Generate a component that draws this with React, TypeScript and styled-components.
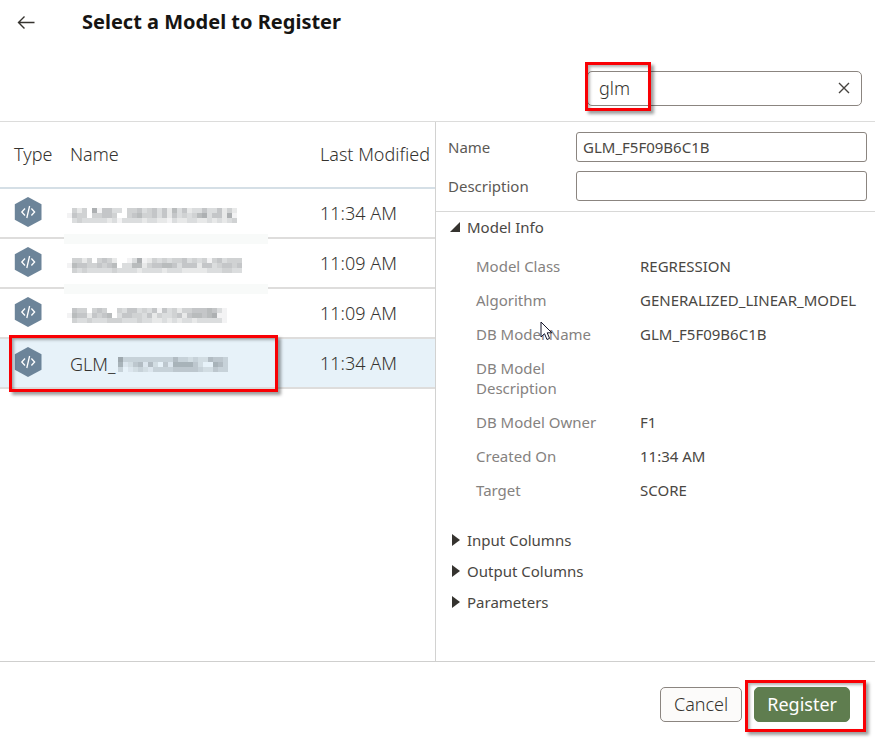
import React, { useState } from "react";
import styled, { createGlobalStyle, css } from "styled-components";

const GlobalStyle = createGlobalStyle`
  * { box-sizing: border-box; }
  body {
    margin: 0;
    background: #fff;
    color: #35332f;
    font-family: "Noto Sans", "Open Sans", sans-serif;
    font-size: 15px;
    font-weight: 300;
  }
  button, input { font: inherit; color: inherit; }
`;

const Page = styled.div`
  display: flex;
  flex-direction: column;
  min-height: 100vh;
`;

const Header = styled.header`
  display: flex;
  flex-direction: column;
  gap: 27px;
  padding-bottom: 15px;
  border-bottom: 1px solid #dcdcdb;
`;

const TitleBar = styled.div`
  display: flex;
  align-items: center;
  gap: 40px;
  height: 44px;
  padding-left: 10px;
`;

const IconButton = styled.button`
  display: grid;
  place-items: center;
  width: 32px;
  height: 32px;
  padding: 0;
  border: 0;
  background: none;
  cursor: pointer;
`;

const Title = styled.h1`
  margin: 0;
  font-size: 20px;
  line-height: 28px;
  font-weight: 700;
  color: #161513;
`;

const SearchRow = styled.div`
  display: flex;
  justify-content: flex-end;
  padding-right: 13px;
`;

const SearchBox = styled.div`
  position: relative;
  display: flex;
  align-items: center;
  width: 275px;
  height: 35px;
  padding: 0 1px 2px 11px;
  border: 1px solid #8b8580;
  border-radius: 5px;
`;

const SearchInput = styled.input`
  flex: 1;
  min-width: 0;
  padding: 0;
  border: 0;
  outline: 0;
  background: none;
  font-size: 18px;
`;

const Highlight = styled.span<{ $area: "search" | "row" | "submit" }>`
  position: absolute;
  z-index: 1;
  pointer-events: none;
  border: 3px solid #f90004;
  box-shadow: 3px 3px 3px rgba(0, 0, 0, 0.38), inset 2px 2px 3px rgba(0, 0, 0, 0.3);
  ${({ $area }) => $area === "search" && css`top: -10px; bottom: -6px; left: -3px; width: 66px;`}
  ${({ $area }) => $area === "row" && css`top: -4px; bottom: -5px; left: -61px; right: 42px;`}
  ${({ $area }) => $area === "submit" && css`top: -7px; bottom: -10px; left: -9px; right: -16px;`}
`;

const Main = styled.main`
  flex: 1;
  display: grid;
  grid-template-columns: minmax(0, 436fr) minmax(0, 439fr);
`;

const ListPane = styled.section`
  border-right: 1px solid #d2d2d1;
`;

const ModelTable = styled.table`
  width: 100%;
  table-layout: fixed;
  border-collapse: separate;
  border-spacing: 0;
  font-size: 18px;
  line-height: 24px;
`;

const HeadCell = styled.th<{ $width?: number }>`
  width: ${({ $width }) => ($width ? `${$width}px` : "auto")};
  height: 67px;
  padding: 0 0 2px;
  border-bottom: 2px solid #d5dfe6;
  text-align: left;
  font-weight: 300;
  white-space: nowrap;

  &:first-child { padding-left: 14px; }
`;

const ModelRow = styled.tr<{ $selected: boolean }>`
  background: ${({ $selected }) => ($selected ? "#e7f2f9" : "#fff")};
`;

const Cell = styled.td`
  position: relative;
  height: 50px;
  padding: 0;
  border-bottom: 2px solid #dedddc;
  white-space: nowrap;
`;

const TypeCell = styled(Cell)`
  padding: 0 0 2px 14px;

  svg { display: block; }
`;

const NameCell = styled(Cell)<{ $masked: boolean }>`
  padding-top: ${({ $masked }) => ($masked ? 5 : 2)}px;
`;

const NameLine = styled.span<{ $masked: boolean }>`
  display: flex;
  align-items: center;
  gap: 2px;
  margin-left: ${({ $masked }) => ($masked ? -3 : 0)}px;
`;

const Mosaic = styled.svg`
  display: block;
  flex: none;
`;

const Smudge = styled.span`
  position: absolute;
  left: -6px;
  right: 52px;
  bottom: -7px;
  height: 10px;
  z-index: 1;
  background: #f8faf9;
`;

const DetailPane = styled.section`
  position: relative;
  font-weight: 400;
`;

const Form = styled.form`
  display: grid;
  gap: 9px;
  padding: 10px 8px 10px 12px;
  border-bottom: 1px solid #d8d8d7;
`;

const Field = styled.div`
  display: grid;
  grid-template-columns: 128px minmax(0, 1fr);
  align-items: center;
`;

const Label = styled.label`
  font-size: 15px;
  line-height: 20px;
  color: #5c5955;
`;

const TextInput = styled.input`
  width: 100%;
  height: 30px;
  padding: 0 6px;
  border: 1px solid #8b8580;
  border-radius: 3px;
  background: #fff;
  font-size: 15px;
  color: #4a4743;
`;

const Sections = styled.div`
  display: grid;
  gap: 1px;
  padding-left: 14px;
`;

const Toggle = styled.button`
  display: flex;
  align-items: center;
  gap: 6px;
  width: 100%;
  height: 30px;
  padding: 0;
  border: 0;
  background: none;
  text-align: left;
  color: #4a4743;
  cursor: pointer;
`;

const InfoList = styled.dl`
  display: grid;
  grid-template-columns: 140px minmax(0, 1fr);
  gap: 14px 24px;
  margin: 0;
  padding: 13px 0 24px 26px;
  line-height: 20px;
`;

const Term = styled.dt`
  color: #85827f;
`;

const Value = styled.dd`
  margin: 0;
  white-space: nowrap;
  color: #4a4743;
`;

const Pointer = styled.svg`
  position: absolute;
  top: 199px;
  left: 104px;
  pointer-events: none;
`;

const Footer = styled.footer`
  display: flex;
  align-items: center;
  justify-content: flex-end;
  gap: 12px;
  height: 82px;
  padding: 3px 25px 0 0;
  border-top: 1px solid #cfcfce;
`;

const SubmitWrap = styled.div`
  position: relative;
`;

const ActionButton = styled.button<{ $primary?: boolean }>`
  display: block;
  height: 35px;
  padding: 0 ${({ $primary }) => ($primary ? 12 : 13)}px;
  border: 1px solid ${({ $primary }) => ($primary ? "#5f7d4f" : "#8b8580")};
  border-radius: 5px;
  background: ${({ $primary }) => ($primary ? "#5f7d4f" : "#fcfbfa")};
  color: ${({ $primary }) => ($primary ? "#fff" : "#35332f")};
  font-size: 18px;
  font-weight: ${({ $primary }) => ($primary ? 400 : 300)};
  cursor: pointer;
`;

const BackIcon = () => (
  <svg width="18" height="14" viewBox="0 0 18 14" fill="none" stroke="#35332f" strokeWidth="1.4">
    <path d="M7.5 1.5 1.5 7.5 7.5 13.5M1.5 7.5H17.5" />
  </svg>
);

const ClearIcon = () => (
  <svg width="12" height="12" viewBox="0 0 12 12" fill="none" stroke="#46433f" strokeWidth="1.4">
    <path d="m1 1 10 10M11 1 1 11" />
  </svg>
);

const ModelIcon = () => (
  <svg width="28" height="30" viewBox="0 0 28 30" role="img" aria-label="Model">
    <path d="M14 0 27.5 7.2v15.6L14 30 .8 22.8V7.2Z" fill="#6c8499" />
    <g fill="none" stroke="#fff" strokeWidth="1.3">
      <path d="M11 11.5 7.8 15l3.2 3.5M17.4 11.5l3.2 3.5-3.2 3.5M15.6 9 12.8 21" />
    </g>
  </svg>
);

const Caret = ({ open }: { open: boolean }) => (
  <svg width="11" height="12" viewBox="0 0 11 12" fill="#35332f">
    <path d={open ? "M10 1v10H0Z" : "M2 0v12l8-6Z"} />
  </svg>
);

const CELL = 5;

/* Each digit is the darkness of one block; 0 leaves the block clear. */
const Redaction = ({ rows }: { rows: string[] }) => (
  <Mosaic width={rows[0].length * CELL} height={rows.length * CELL} shapeRendering="crispEdges" aria-hidden="true">
    {rows.flatMap((row, y) =>
      row.split("").map((level, x) =>
        level === "0" ? null : (
          <rect
            key={`${x}-${y}`}
            x={x * CELL}
            y={y * CELL}
            width={CELL}
            height={CELL}
            fill="#222b30"
            fillOpacity={Number(level) * 0.053}
          />
        )
      )
    )}
  </Mosaic>
);

type Model = { prefix?: string; blocks: string[]; modified: string; smudge?: boolean };

const models: Model[] = [
  {
    blocks: [
      "0424071553304453453526352335335242",
      "1544044554004564453525343467355271",
      "0343333323133332332213223322323234",
    ],
    modified: "11:34 AM",
    smudge: true,
  },
  {
    blocks: [
      "04424045420013712434344534341453444",
      "16554454560336624556653555255345545",
      "04343333343333233332333222223334433",
    ],
    modified: "11:09 AM",
    smudge: true,
  },
  {
    blocks: [
      "05440454004355343515342445556531",
      "16552545603554435243345256656711",
      "04334333444333433223232332333331",
    ],
    modified: "11:09 AM",
  },
  {
    prefix: "GLM_",
    blocks: [
      "7333333333353323225443",
      "6124515204166664200653",
      "3012321333344444322433",
    ],
    modified: "11:34 AM",
  },
];

const modelInfo: [string, string][] = [
  ["Model Class", "REGRESSION"],
  ["Algorithm", "GENERALIZED_LINEAR_MODEL"],
  ["DB Model Name", "GLM_F5F09B6C1B"],
  ["DB Model Description", ""],
  ["DB Model Owner", "F1"],
  ["Created On", "11:34 AM"],
  ["Target", "SCORE"],
];

export default function App() {
  const [query, setQuery] = useState("glm");
  const [infoOpen, setInfoOpen] = useState(true);

  return (
    <Page>
      <GlobalStyle />
      <Header>
        <TitleBar>
          <IconButton type="button" aria-label="Back">
            <BackIcon />
          </IconButton>
          <Title>Select a Model to Register</Title>
        </TitleBar>
        <SearchRow>
          <SearchBox>
            <SearchInput aria-label="Search models" value={query} onChange={(e) => setQuery(e.target.value)} />
            <IconButton type="button" aria-label="Clear search" onClick={() => setQuery("")}>
              <ClearIcon />
            </IconButton>
            <Highlight $area="search" />
          </SearchBox>
        </SearchRow>
      </Header>

      <Main>
        <ListPane>
          <ModelTable>
            <thead>
              <tr>
                <HeadCell $width={70}>Type</HeadCell>
                <HeadCell>Name</HeadCell>
                <HeadCell $width={115}>Last Modified</HeadCell>
              </tr>
            </thead>
            <tbody>
              {models.map((model, i) => (
                <ModelRow key={i} $selected={Boolean(model.prefix)}>
                  <TypeCell>
                    <ModelIcon />
                  </TypeCell>
                  <NameCell $masked={!model.prefix}>
                    <NameLine $masked={!model.prefix}>
                      {model.prefix}
                      <Redaction rows={model.blocks} />
                    </NameLine>
                    {model.smudge && <Smudge />}
                    {model.prefix && <Highlight $area="row" />}
                  </NameCell>
                  <Cell>{model.modified}</Cell>
                </ModelRow>
              ))}
            </tbody>
          </ModelTable>
        </ListPane>

        <DetailPane>
          <Form>
            <Field>
              <Label htmlFor="model-name">Name</Label>
              <TextInput id="model-name" defaultValue="GLM_F5F09B6C1B" />
            </Field>
            <Field>
              <Label htmlFor="model-description">Description</Label>
              <TextInput id="model-description" />
            </Field>
          </Form>
          <Sections>
            <Toggle type="button" aria-expanded={infoOpen} onClick={() => setInfoOpen(!infoOpen)}>
              <Caret open={infoOpen} />
              Model Info
            </Toggle>
            {infoOpen && (
              <InfoList>
                {modelInfo.map(([term, value]) => (
                  <React.Fragment key={term}>
                    <Term>{term}</Term>
                    <Value>{value}</Value>
                  </React.Fragment>
                ))}
              </InfoList>
            )}
            {["Input Columns", "Output Columns", "Parameters"].map((name) => (
              <Toggle type="button" aria-expanded={false} key={name}>
                <Caret open={false} />
                {name}
              </Toggle>
            ))}
          </Sections>
          <Pointer width="13" height="20" viewBox="0 0 13 20" aria-hidden="true">
            <path d="M1 1v15l3.5-3.3L7 18.5l2.6-1.1-2.4-5.6h4.6Z" fill="#fff" stroke="#15152b" />
          </Pointer>
        </DetailPane>
      </Main>

      <Footer>
        <ActionButton type="button">Cancel</ActionButton>
        <SubmitWrap>
          <ActionButton type="button" $primary>
            Register
          </ActionButton>
          <Highlight $area="submit" />
        </SubmitWrap>
      </Footer>
    </Page>
  );
}
